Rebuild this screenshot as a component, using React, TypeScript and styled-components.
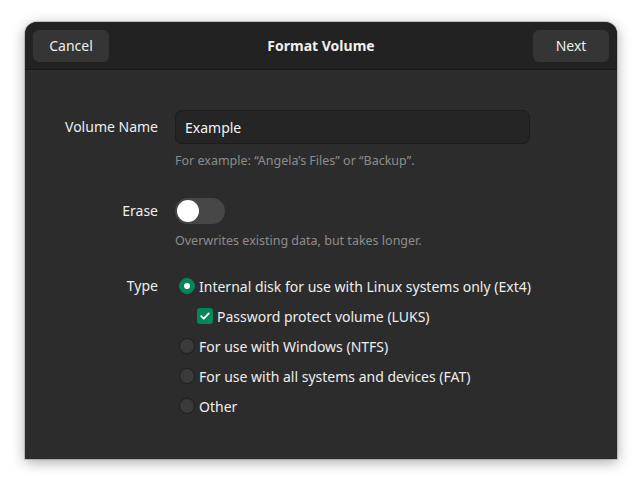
import React from "react";
import styled, { createGlobalStyle } from "styled-components";

const Global = createGlobalStyle`
  html, body { margin: 0; padding: 0; background: #ffffff; }
  body { font-family: "Noto Sans", "DejaVu Sans", sans-serif; }
  * { box-sizing: border-box; }
`;

const Page = styled.div`
  width: 642px;
  height: 487px;
  padding: 22px 25px 0 25px;
`;

const Dialog = styled.div`
  width: 592px;
  height: 437px;
  background: #2c2c2c;
  border-radius: 12px 12px 0 0;
  box-shadow: 0 3px 14px rgba(0, 0, 0, 0.35), 0 0 0 1px rgba(0, 0, 0, 0.15);
  overflow: hidden;
  display: flex;
  flex-direction: column;
  color: #eeeeec;
`;

const HeaderBar = styled.div`
  height: 48px;
  background: #222222;
  border-bottom: 1px solid #191919;
  display: flex;
  align-items: center;
  justify-content: space-between;
  padding: 0 8px;
`;

const HeaderButton = styled.button`
  width: 76px;
  height: 32px;
  border: none;
  border-radius: 6px;
  background: #353535;
  color: #eeeeec;
  font-family: inherit;
  font-size: 14px;
  padding: 0;
`;

const Title = styled.div`
  font-weight: 700;
  font-size: 14px;
  color: #f0f0f0;
`;

const Body = styled.div`
  padding: 40px 0 0 0;
  display: grid;
  grid-template-columns: 133px 355px;
  column-gap: 17px;
  align-items: start;
`;

const Label = styled.div<{ $h: number }>`
  text-align: right;
  font-size: 14px;
  height: ${(p) => p.$h}px;
  line-height: ${(p) => p.$h}px;
  color: #eeeeec;
`;

const Field = styled.div<{ $mb: number }>`
  display: flex;
  flex-direction: column;
  margin-bottom: ${(p) => p.$mb}px;
`;

const Entry = styled.div`
  height: 34px;
  background: #252525;
  border: 1px solid #1c1c1c;
  border-radius: 7px;
  padding: 0 9px;
  display: flex;
  align-items: center;
  font-size: 14px;
  color: #f2f2f2;
`;

const Hint = styled.div`
  margin-top: 8px;
  font-size: 12.5px;
  line-height: 17px;
  color: #8c8c8c;
  white-space: nowrap;
`;

const SwitchTrack = styled.div<{ $on: boolean }>`
  width: 50px;
  height: 26px;
  border-radius: 13px;
  background: ${(p) => (p.$on ? "#03875b" : "#474747")};
  padding: 2px;
  display: flex;
`;

const Knob = styled.div`
  width: 22px;
  height: 22px;
  border-radius: 50%;
  background: #ffffff;
`;

const Options = styled.div`
  display: flex;
  flex-direction: column;
  margin-left: 4px;
  width: max-content;
`;

const Option = styled.div<{ $indent?: boolean }>`
  height: 30px;
  display: flex;
  align-items: center;
  gap: 4px;
  font-size: 14px;
  color: #eeeeec;
  white-space: nowrap;
  padding-left: ${(p) => (p.$indent ? 18 : 0)}px;
`;

const Radio = styled.div<{ $checked: boolean }>`
  width: 16px;
  height: 16px;
  border-radius: 50%;
  background: ${(p) => (p.$checked ? "#03875b" : "#3a3a3a")};
  border: 1px solid ${(p) => (p.$checked ? "#03875b" : "#1f1f1f")};
  display: flex;
  align-items: center;
  justify-content: center;
  flex-shrink: 0;
  &::after {
    content: "";
    display: ${(p) => (p.$checked ? "block" : "none")};
    width: 6px;
    height: 6px;
    border-radius: 50%;
    background: #ffffff;
  }
`;

const Check = styled.div`
  width: 16px;
  height: 16px;
  border-radius: 3px;
  background: #03875b;
  display: flex;
  align-items: center;
  justify-content: center;
  flex-shrink: 0;
`;

export default function App() {
  return (
    <>
      <Global />
      <Page>
        <Dialog>
          <HeaderBar>
            <HeaderButton>Cancel</HeaderButton>
            <Title>Format Volume</Title>
            <HeaderButton>Next</HeaderButton>
          </HeaderBar>
          <Body>
            <Label $h={34}>Volume Name</Label>
            <Field $mb={29}>
              <Entry>Example</Entry>
              <Hint>For example: “Angela’s Files” or “Backup”.</Hint>
            </Field>

            <Label $h={26}>Erase</Label>
            <Field $mb={22}>
              <SwitchTrack $on={false}>
                <Knob />
              </SwitchTrack>
              <Hint>Overwrites existing data, but takes longer.</Hint>
            </Field>

            <Label $h={30}>Type</Label>
            <Options>
              <Option>
                <Radio $checked={true} />
                Internal disk for use with Linux systems only (Ext4)
              </Option>
              <Option $indent>
                <Check>
                  <svg width="12" height="12" viewBox="0 0 12 12">
                    <path d="M2.2 6.2 L4.8 8.7 L9.8 3.4" fill="none" stroke="#fff" strokeWidth="1.8" strokeLinecap="round" strokeLinejoin="round" />
                  </svg>
                </Check>
                Password protect volume (LUKS)
              </Option>
              <Option>
                <Radio $checked={false} />
                For use with Windows (NTFS)
              </Option>
              <Option>
                <Radio $checked={false} />
                For use with all systems and devices (FAT)
              </Option>
              <Option>
                <Radio $checked={false} />
                Other
              </Option>
            </Options>
          </Body>
        </Dialog>
      </Page>
    </>
  );
}
